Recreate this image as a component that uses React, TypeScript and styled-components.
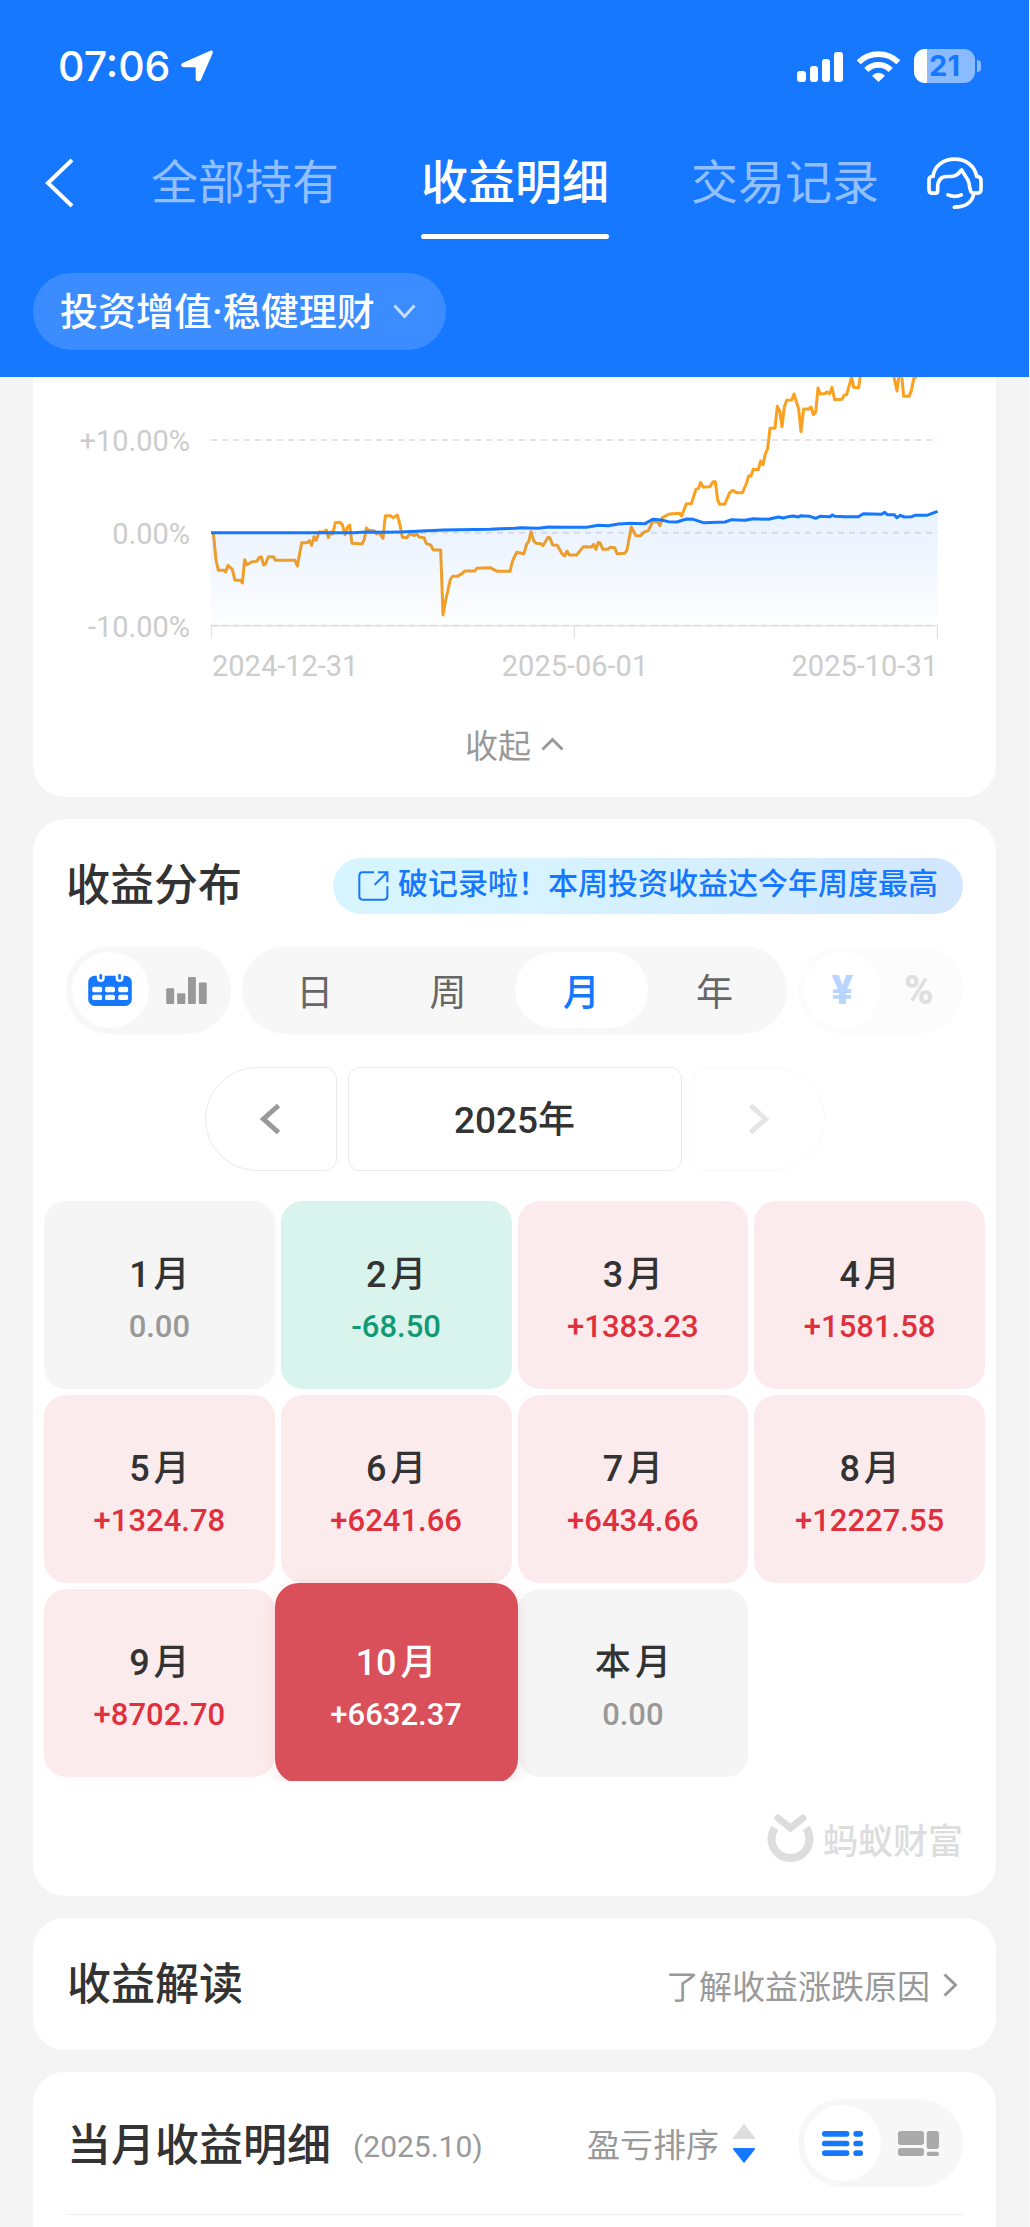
import React, { useState } from "react";
import styled, { createGlobalStyle, css } from "styled-components";

const color = {
  brand: "#1677ff",
  page: "#f4f4f4",
  ink: "#333333",
  sub: "#999999",
  faint: "#cccccc",
  track: "#f7f7f7",
  gain: "#e0303e",
  loss: "#119973",
};

const GlobalStyle = createGlobalStyle`
  * { box-sizing: border-box; }
  body {
    margin: 0;
    background: ${color.page};
    color: ${color.ink};
    font-family: Roboto, "Noto Sans CJK SC", sans-serif;
  }
  button, select {
    margin: 0;
    padding: 0;
    border: 0;
    background: none;
    color: inherit;
    font: inherit;
    cursor: pointer;
  }
  h2, p { margin: 0; font-weight: inherit; }
  a { color: inherit; text-decoration: none; }
  svg { display: block; flex: none; }
`;

const Page = styled.div`
  display: flex;
  flex-direction: column;
  min-height: 100vh;
  border-right: 1px solid #fafafa;
`;

/* ---------- header ---------- */

const Header = styled.header`
  background: ${color.brand};
  color: #fff;
`;

const StatusBar = styled.div`
  display: flex;
  align-items: center;
  justify-content: space-between;
  height: 132px;
  padding: 0 48px 0 58px;
`;

const StatusGroup = styled.div<{ $gap: number }>`
  display: flex;
  align-items: center;
  gap: ${(p) => p.$gap}px;
`;

const Clock = styled.span`
  font: 500 41px/48px Inter, sans-serif;
`;

const Battery = styled.div`
  display: flex;
  align-items: center;
  gap: 2px;
  &::after {
    content: "";
    width: 4px;
    height: 12px;
    border-radius: 0 4px 4px 0;
    background: rgba(255, 255, 255, 0.5);
  }
`;

const BatteryBody = styled.div`
  width: 61px;
  height: 34px;
  border-radius: 11px;
  background: linear-gradient(to right, #fff 13px, rgba(255, 255, 255, 0.5) 13px);
  color: ${color.brand};
  font: 700 29px/34px Inter, sans-serif;
  text-align: center;
`;

const NavBar = styled.nav`
  display: flex;
  align-items: flex-start;
  justify-content: space-between;
  padding: 0 46px 0 45px;
`;

const NavIcon = styled.button`
  display: flex;
  align-items: center;
  height: 102px;
`;

const Tabs = styled.div`
  display: flex;
  gap: 82px;
  padding-left: 29px;
`;

const Tab = styled.button<{ $active?: boolean }>`
  border-bottom: 5px solid transparent;
  color: rgba(255, 255, 255, 0.55);
  font-size: 47px;
  line-height: 102px;
  ${(p) =>
    p.$active &&
    css`
      color: #fff;
      font-weight: 500;
      &::after {
        content: "";
        display: block;
        height: 5px;
        margin-bottom: -5px;
        border-radius: 3px;
        background: #fff;
      }
    `}
`;

const FilterRow = styled.div`
  display: flex;
  padding: 34px 33px 27px;
`;

const FilterPill = styled.label`
  display: flex;
  align-items: center;
  gap: 18px;
  height: 77px;
  padding: 0 30px 0 27px;
  border-radius: 39px;
  background: rgba(255, 255, 255, 0.16);
`;

const FilterSelect = styled.select`
  appearance: none;
  font-size: 38px;
  font-weight: 500;
  line-height: 56px;
  outline: none;
`;

const PillArrow = styled.span`
  color: rgba(255, 255, 255, 0.7);
`;

/* ---------- cards ---------- */

const Main = styled.main`
  display: flex;
  flex: 1;
  flex-direction: column;
  gap: 22px;
  padding: 0 33px;
`;

const Card = styled.section<{ $edge?: "top" | "bottom" }>`
  flex: ${(p) => (p.$edge === "bottom" ? "1 0 auto" : "none")};
  border-radius: ${(p) =>
    p.$edge === "top" ? "0 0 32px 32px" : p.$edge === "bottom" ? "32px 32px 0 0" : "32px"};
  background: #fff;
`;

const CardTitle = styled.h2`
  font-size: 44px;
  font-weight: 500;
  line-height: 56px;
  white-space: nowrap;
`;

/* ---------- chart ---------- */

const ChartArea = styled.div`
  display: flex;
  gap: 21px;
  height: 263px;
  padding: 0 58px 0 33px;
`;

const YAxis = styled.div`
  display: flex;
  flex-direction: column;
  width: 124px;
  padding-top: 18px;
  color: ${color.faint};
  font-size: 29px;
  line-height: 93px;
  text-align: right;
`;

const PlotBox = styled.div`
  flex: 1;
  min-width: 0;
  svg {
    width: 100%;
    height: 263px;
  }
`;

const XAxis = styled.div`
  display: flex;
  justify-content: space-between;
  padding: 0 58px 0 179px;
  color: ${color.faint};
  font-size: 29px;
  line-height: 52px;
`;

const CollapseButton = styled.button`
  display: flex;
  align-items: center;
  gap: 10px;
  margin: 0 auto;
  height: 105px;
  padding-bottom: 2px;
  color: ${color.sub};
  font-size: 33px;
`;

/* ---------- distribution ---------- */

const DistributionHead = styled.div`
  display: flex;
  align-items: center;
  justify-content: space-between;
  padding: 39px 33px 0;
`;

const Notice = styled.a`
  display: flex;
  align-items: center;
  gap: 9px;
  padding: 0 25px;
  border-radius: 28px;
  background: linear-gradient(100deg, #d6f6ff, #d6f1fe 50%, #d2e6fe);
  color: ${color.brand};
  font-size: 30px;
  font-weight: 500;
  white-space: nowrap;
  p {
    padding-bottom: 4px;
    line-height: 52px;
  }
`;

const Controls = styled.div`
  display: flex;
  gap: 11px;
  padding: 32px 33px 0;
`;

const Segment = styled.div<{ $wide?: boolean; $muted?: boolean }>`
  display: flex;
  flex: ${(p) => (p.$wide ? "1" : "0 0 165px")};
  height: 88px;
  padding: 6px;
  border-radius: 44px;
  background: ${color.track};
  opacity: ${(p) => (p.$muted ? 0.3 : 1)};
`;

const SegmentItem = styled.button<{ $active?: boolean }>`
  display: flex;
  flex: 1;
  align-items: center;
  justify-content: center;
  border-radius: 38px;
  background: ${(p) => (p.$active ? "#fff" : "transparent")};
  color: ${(p) => (p.$active ? color.brand : "#666")};
  font-size: 37px;
  font-weight: ${(p) => (p.$active ? 500 : 400)};
`;

const UnitSign = styled.span<{ $on?: boolean }>`
  color: ${(p) => (p.$on ? color.brand : "#999")};
  font-size: 40px;
  font-weight: 900;
`;

const YearNav = styled.div`
  display: flex;
  justify-content: center;
  gap: 11px;
  padding-top: 33px;
`;

const YearStep = styled.button<{ $side: "left" | "right" }>`
  display: flex;
  align-items: center;
  justify-content: center;
  width: 132px;
  height: 104px;
  border: 1px solid #eaeaea;
  border-radius: ${(p) => (p.$side === "left" ? "52px 12px 12px 52px" : "12px 52px 52px 12px")};
  color: ${color.sub};
  &:disabled {
    opacity: 0.25;
    cursor: default;
  }
`;

const YearLabel = styled.button`
  width: 334px;
  height: 104px;
  padding-bottom: 4px;
  border: 1px solid #eaeaea;
  border-radius: 12px;
  font-size: 37px;
  font-weight: 500;
`;

const MonthGrid = styled.div`
  display: grid;
  grid-template-columns: repeat(4, 1fr);
  gap: 6px;
  margin-top: 24px;
  padding: 6px 11px 4px;
  overflow: hidden;
`;

type Tone = "flat" | "gain" | "loss";

const toneBack: Record<Tone, string> = { flat: "#f5f5f5", gain: "#fcebec", loss: "#d8f4ec" };
const toneInk: Record<Tone, string> = { flat: color.sub, gain: color.gain, loss: color.loss };

const MonthCell = styled.button<{ $tone: Tone; $selected: boolean }>`
  display: flex;
  flex-direction: column;
  align-items: center;
  height: 188px;
  padding-top: 48px;
  border-radius: 22px;
  background: ${(p) => toneBack[p.$tone]};
  color: ${(p) => toneInk[p.$tone]};
  ${(p) =>
    p.$selected &&
    css`
      z-index: 1;
      height: 200px;
      margin: -6px;
      padding-top: 54px;
      border-radius: 24px;
      background: #d94f5a;
      box-shadow: 0 4px 16px rgba(217, 79, 90, 0.16);
      color: #fff;
    `}
`;

const MonthName = styled.span<{ $selected: boolean }>`
  display: flex;
  gap: 4px;
  color: ${(p) => (p.$selected ? "#fff" : color.ink)};
  font-size: 36px;
  font-weight: 500;
  line-height: 52px;
`;

const MonthValue = styled.span`
  font-size: 31px;
  font-weight: 500;
  line-height: 52px;
`;

const Watermark = styled.div`
  display: flex;
  align-items: center;
  justify-content: flex-end;
  gap: 9px;
  height: 115px;
  padding: 0 33px;
  color: #dddddd;
  font-size: 35px;
  font-weight: 500;
`;

/* ---------- bottom cards ---------- */

const InsightRow = styled.div`
  display: flex;
  align-items: center;
  justify-content: space-between;
  padding: 39px 38px 37px 34px;
`;

const MoreLink = styled.a`
  display: flex;
  align-items: center;
  gap: 13px;
  color: ${color.sub};
  font-size: 33px;
`;

const DetailHead = styled.div`
  display: flex;
  align-items: center;
  margin: 0 33px;
  padding: 27px 0;
  border-bottom: 1px solid #eeeeee;
`;

const DetailTitle = styled.div`
  display: flex;
  flex: 1;
  align-items: center;
  padding: 5px 0 0 1px;
`;

const Period = styled.span`
  padding: 2px 0 0 22px;
  color: ${color.sub};
  font-size: 30px;
`;

const SortButton = styled.button`
  display: flex;
  align-items: center;
  gap: 14px;
  margin-right: 43px;
  color: ${color.sub};
  font-size: 33px;
`;

/* ---------- icons ---------- */

const Chevron = ({
  w,
  h,
  dir,
  stroke = 3,
}: {
  w: number;
  h: number;
  dir: "left" | "right" | "up" | "down";
  stroke?: number;
}) => {
  const s = stroke / 2;
  const d = {
    left: `M${w - s} ${s}L${s + 1} ${h / 2}L${w - s} ${h - s}`,
    right: `M${s} ${s}L${w - s - 1} ${h / 2}L${s} ${h - s}`,
    up: `M${s} ${h - s}L${w / 2} ${s + 1}L${w - s} ${h - s}`,
    down: `M${s} ${s}L${w / 2} ${h - s - 1}L${w - s} ${s}`,
  }[dir];
  return (
    <svg width={w} height={h} fill="none" stroke="currentColor" strokeWidth={stroke} aria-hidden>
      <path d={d} />
    </svg>
  );
};

const LocationArrow = () => (
  <svg width="32" height="32" viewBox="0 0 96 94" fill="#fff" aria-hidden>
    <path d="M88 1C94-1 97 3 95 9L60 88C57 95 44 95 44 86V54Q44 51 41 51H8C-1 51-2 40 6 37Z" />
  </svg>
);

const Signal = () => (
  <svg width="46" height="31" viewBox="0 0 46 31" fill="#fff" aria-hidden>
    <rect x="0" y="20" width="9" height="11" rx="3" />
    <rect x="13" y="15" width="8" height="16" rx="3" />
    <rect x="25" y="8" width="8" height="23" rx="3" />
    <rect x="37" y="1" width="9" height="30" rx="3" />
  </svg>
);

const Wifi = () => (
  <svg width="43" height="31" viewBox="0 0 129 93" fill="none" stroke="#fff" strokeWidth="17" aria-hidden>
    <path d="M5 34A84 84 0 0 1 124 34" />
    <path d="M28 57A51 51 0 0 1 101 57" />
    <path d="M64.500 93L45 74Q64.500 57 84 74Z" fill="#fff" stroke="none" />
  </svg>
);

const Headset = () => (
  <svg width="56" height="53" viewBox="0 0 168 158" fill="none" stroke="#fff" strokeWidth="11" strokeLinecap="round" strokeLinejoin="round" aria-hidden>
    <path d="M18 57C22 25 50 6 83 6C116 6 143 25 149 57" />
    <path d="M18 58H15C8 58 6 62 6 70V96C6 104 9 108 16 108H26C30 108 32 105 32 100V92C32 70 42 58 60 58H72C88 58 94 50 104 38C108 50 122 60 126 78C128 90 129 100 133 105C136 109 140 108 148 108C158 108 162 104 162 96V70C162 62 158 58 149 58" />
    <path d="M140 110C136 134 116 150 82 150" />
    <path d="M63 113Q84 122 103 113" />
  </svg>
);

const ShareIcon = () => (
  <svg width="31" height="30" viewBox="0 0 93 90" fill="none" stroke="currentColor" strokeWidth="6" aria-hidden>
    <path d="M48 4H14Q4 4 4 14V76Q4 86 14 86H78Q88 86 88 76V46" />
    <path d="M60 4H88V34M88 4L50 41" />
  </svg>
);

const CalendarIcon = () => (
  <svg width="44" height="32" viewBox="0 0 132 97" aria-hidden>
    <rect y="5" width="132" height="92" rx="20" fill={color.brand} />
    <g fill="#fff">
      <rect x="26" y="-8" width="24" height="32" rx="12" />
      <rect x="83" y="-8" width="24" height="32" rx="12" />
      {[39, 63].map((y) =>
        [12, 51, 91].map((x) => <rect key={`${x}-${y}`} x={x} y={y} width="30" height="16" rx="5" />)
      )}
    </g>
    <rect x="34" y="0" width="8" height="17" rx="4" fill={color.brand} />
    <rect x="91" y="0" width="8" height="17" rx="4" fill={color.brand} />
  </svg>
);

const BarsIcon = () => (
  <svg width="41" height="27" viewBox="0 0 123 82" fill="#999" aria-hidden>
    <rect x="0" y="34" width="24" height="48" rx="3" />
    <rect x="33" y="49" width="25" height="33" rx="3" />
    <rect x="66" y="0" width="24" height="82" rx="3" />
    <rect x="99" y="17" width="24" height="65" rx="3" />
  </svg>
);

const AntLogo = () => (
  <svg width="47" height="49" viewBox="0 0 47 49" fill="none" stroke="#dddddd" aria-hidden>
    <path d="M8 14A19 19 0 1 0 39 14" strokeWidth="8" />
    <path d="M11 4L23.500 14L36 4" strokeWidth="7" strokeLinecap="round" />
  </svg>
);

const SortIcon = () => (
  <svg width="22" height="39" viewBox="0 0 66 117" strokeLinejoin="round" strokeWidth="6" aria-hidden>
    <path d="M33 4L63 42H3Z" fill="#ddd" stroke="#ddd" />
    <path d="M33 113L63 75H3Z" fill={color.brand} stroke={color.brand} />
  </svg>
);

const ListIcon = () => (
  <svg width="41" height="25" viewBox="0 0 123 75" fill={color.brand} aria-hidden>
    {[0, 29, 58].map((y) => (
      <g key={y}>
        <rect x="0" y={y} width="82" height="17" rx="8" />
        <rect x="94" y={y} width="29" height="17" rx="8" />
      </g>
    ))}
  </svg>
);

const BlocksIcon = () => (
  <svg width="41" height="25" viewBox="0 0 123 75" fill="#aaa" aria-hidden>
    <rect x="0" y="0" width="78" height="42" rx="8" />
    <rect x="0" y="51" width="78" height="24" rx="8" />
    <rect x="86" y="0" width="37" height="54" rx="8" />
    <rect x="86" y="62" width="37" height="13" rx="6" />
  </svg>
);

/* ---------- chart data ---------- */

const indexLine =
  "7,467 15,549 22,580 39,580 44,585 51,565 64,577 72,610 89,610 94,618 101,548 108,563 123,554 137,553 145,541 151,540 158,564 164,560 172,539 187,539 194,550 252,550 259,567 272,497 289,497 295,491 302,505 309,479 316,490 324,465 339,465 346,459 352,482 359,465 365,471 373,437 387,436 394,443 402,473 409,451 416,444 423,499 453,501 460,487 466,453 474,460 489,461 496,471 504,466 516,484 523,416 538,416 546,422 559,414 567,444 574,481 588,482 596,470 610,476 617,469 624,480 639,482 646,500 659,504 667,519 689,519 696,714 704,669 711,639 718,607 725,598 739,598 753,590 761,582 791,582 797,574 837,572 859,583 897,583 904,554 912,536 917,526 939,530 947,501 953,494 960,464 968,491 975,499 990,500 996,506 1011,481 1017,483 1025,504 1039,505 1054,532 1061,537 1068,522 1075,534 1097,534 1117,509 1142,510 1148,502 1155,517 1162,496 1167,498 1176,517 1190,517 1197,511 1211,512 1218,530 1242,529 1248,519 1261,450 1275,476 1289,476 1298,466 1312,461 1325,434 1340,434 1347,446 1354,422 1375,411 1406,409 1412,417 1426,380 1441,380 1455,337 1462,335 1469,316 1476,330 1497,329 1506,314 1513,314 1520,369 1526,382 1541,382 1556,347 1565,340 1577,347 1594,347 1606,320 1613,297 1620,297 1627,277 1642,278 1649,252 1656,263 1663,231 1670,214 1677,154 1692,154 1699,88 1706,102 1713,149 1720,90 1727,70 1742,69 1749,51 1763,96 1770,164 1778,96 1793,96 1800,90 1807,113 1814,106 1821,33 1827,50 1842,50 1848,45 1856,50 1863,31 1871,68 1893,67 1900,54 1907,53 1922,-1 1928,31 1943,32 1949,-11 2000,-80 2047,-11 2058,42 2064,-6 2072,-6 2078,58 2094,58 2101,41 2109,1 2118,1";

const holdingLine =
  "0,467 427,467 467,465 517,466 567,465 617,463 697,459 837,457 867,455 912,454 932,452 982,454 1012,450 1062,451 1127,451 1162,445 1192,446 1222,441 1257,439 1302,440 1325,427 1352,429 1372,434 1397,435 1427,426 1447,427 1477,437 1542,435 1562,428 1602,430 1627,425 1672,427 1702,420 1717,423 1732,419 1747,417 1762,420 1770,416 1782,417 1797,418 1814,424 1827,418 1857,419 1864,414 1872,418 1902,419 1942,419 1957,410 2012,412 2021,406 2029,413 2050,413 2057,422 2068,415 2080,420 2102,419 2112,415 2147,415 2180,403";

const Plot = () => (
  <svg viewBox="0 0 2181 789" preserveAspectRatio="none" fill="none" role="img" aria-label="收益率走势">
    <defs>
      <linearGradient id="fade" x1="0" y1="403" x2="0" y2="746" gradientUnits="userSpaceOnUse">
        <stop offset="0" stopColor={color.brand} stopOpacity="0.1" />
        <stop offset="1" stopColor={color.brand} stopOpacity="0.01" />
      </linearGradient>
    </defs>
    {[189, 467, 746].map((y) => (
      <path key={y} d={`M0 ${y}H2181`} stroke="#e4e4e4" strokeWidth="2" strokeDasharray="6 5" vectorEffect="non-scaling-stroke" />
    ))}
    <path d="M2 785V746H2179V785M1090 746V785" stroke="#dddddd" strokeWidth="1" vectorEffect="non-scaling-stroke" />
    <polyline points={indexLine} stroke="#fba01f" strokeWidth="3" strokeLinejoin="round" vectorEffect="non-scaling-stroke" />
    <polygon points={`${holdingLine} 2180,746 0,746`} fill="url(#fade)" />
    <polyline points={holdingLine} stroke={color.brand} strokeWidth="3" strokeLinejoin="round" vectorEffect="non-scaling-stroke" />
  </svg>
);

/* ---------- month data ---------- */

const months: { name: string; value: string; tone: Tone }[] = [
  { name: "1", value: "0.00", tone: "flat" },
  { name: "2", value: "-68.50", tone: "loss" },
  { name: "3", value: "+1383.23", tone: "gain" },
  { name: "4", value: "+1581.58", tone: "gain" },
  { name: "5", value: "+1324.78", tone: "gain" },
  { name: "6", value: "+6241.66", tone: "gain" },
  { name: "7", value: "+6434.66", tone: "gain" },
  { name: "8", value: "+12227.55", tone: "gain" },
  { name: "9", value: "+8702.70", tone: "gain" },
  { name: "10", value: "+6632.37", tone: "gain" },
  { name: "本", value: "0.00", tone: "flat" },
];

export default function App() {
  const [tab, setTab] = useState("收益明细");
  const [range, setRange] = useState("月");
  const [month, setMonth] = useState("10");

  return (
    <Page>
      <GlobalStyle />
      <Header>
        <StatusBar>
          <StatusGroup $gap={11}>
            <Clock>07:06</Clock>
            <LocationArrow />
          </StatusGroup>
          <StatusGroup $gap={14}>
            <Signal />
            <Wifi />
            <Battery>
              <BatteryBody>21</BatteryBody>
            </Battery>
          </StatusGroup>
        </StatusBar>
        <NavBar>
          <NavIcon aria-label="返回">
            <Chevron w={29} h={50} dir="left" stroke={4} />
          </NavIcon>
          <Tabs>
            {["全部持有", "收益明细", "交易记录"].map((t) => (
              <Tab key={t} $active={t === tab} onClick={() => setTab(t)}>
                {t}
              </Tab>
            ))}
          </Tabs>
          <NavIcon aria-label="客服">
            <Headset />
          </NavIcon>
        </NavBar>
        <FilterRow>
          <FilterPill>
            <FilterSelect aria-label="账户">
              <option>投资增值·稳健理财</option>
            </FilterSelect>
            <PillArrow>
              <Chevron w={23} h={15} dir="down" />
            </PillArrow>
          </FilterPill>
        </FilterRow>
      </Header>

      <Main>
        <Card $edge="top">
          <ChartArea>
            <YAxis>
              <span>+10.00%</span>
              <span>0.00%</span>
              <span>-10.00%</span>
            </YAxis>
            <PlotBox>
              <Plot />
            </PlotBox>
          </ChartArea>
          <XAxis>
            <span>2024-12-31</span>
            <span>2025-06-01</span>
            <span>2025-10-31</span>
          </XAxis>
          <CollapseButton>
            收起
            <Chevron w={23} h={14} dir="up" />
          </CollapseButton>
        </Card>

        <Card>
          <DistributionHead>
            <CardTitle>收益分布</CardTitle>
            <Notice href="#record">
              <ShareIcon />
              <p>破记录啦！本周投资收益达今年周度最高</p>
            </Notice>
          </DistributionHead>
          <Controls>
            <Segment>
              <SegmentItem $active aria-label="日历">
                <CalendarIcon />
              </SegmentItem>
              <SegmentItem aria-label="柱状图">
                <BarsIcon />
              </SegmentItem>
            </Segment>
            <Segment $wide>
              {["日", "周", "月", "年"].map((r) => (
                <SegmentItem key={r} $active={r === range} onClick={() => setRange(r)}>
                  {r}
                </SegmentItem>
              ))}
            </Segment>
            <Segment $muted>
              <SegmentItem $active>
                <UnitSign $on>¥</UnitSign>
              </SegmentItem>
              <SegmentItem>
                <UnitSign>%</UnitSign>
              </SegmentItem>
            </Segment>
          </Controls>
          <YearNav>
            <YearStep $side="left" aria-label="上一年">
              <Chevron w={21} h={32} dir="left" stroke={5} />
            </YearStep>
            <YearLabel>2025年</YearLabel>
            <YearStep $side="right" aria-label="下一年" disabled>
              <Chevron w={21} h={32} dir="right" stroke={5} />
            </YearStep>
          </YearNav>
          <MonthGrid>
            {months.map((m) => {
              const selected = m.name === month;
              return (
                <MonthCell key={m.name} $tone={m.tone} $selected={selected} onClick={() => setMonth(m.name)}>
                  <MonthName $selected={selected}>
                    <span>{m.name}</span>
                    <span>月</span>
                  </MonthName>
                  <MonthValue>{m.value}</MonthValue>
                </MonthCell>
              );
            })}
          </MonthGrid>
          <Watermark>
            <AntLogo />
            蚂蚁财富
          </Watermark>
        </Card>

        <Card>
          <InsightRow>
            <CardTitle>收益解读</CardTitle>
            <MoreLink href="#insight">
              了解收益涨跌原因
              <Chevron w={15} h={24} dir="right" />
            </MoreLink>
          </InsightRow>
        </Card>

        <Card $edge="bottom">
          <DetailHead>
            <DetailTitle>
              <CardTitle>当月收益明细</CardTitle>
              <Period>(2025.10)</Period>
            </DetailTitle>
            <SortButton>
              盈亏排序
              <SortIcon />
            </SortButton>
            <Segment>
              <SegmentItem $active aria-label="列表">
                <ListIcon />
              </SegmentItem>
              <SegmentItem aria-label="色块">
                <BlocksIcon />
              </SegmentItem>
            </Segment>
          </DetailHead>
        </Card>
      </Main>
    </Page>
  );
}
